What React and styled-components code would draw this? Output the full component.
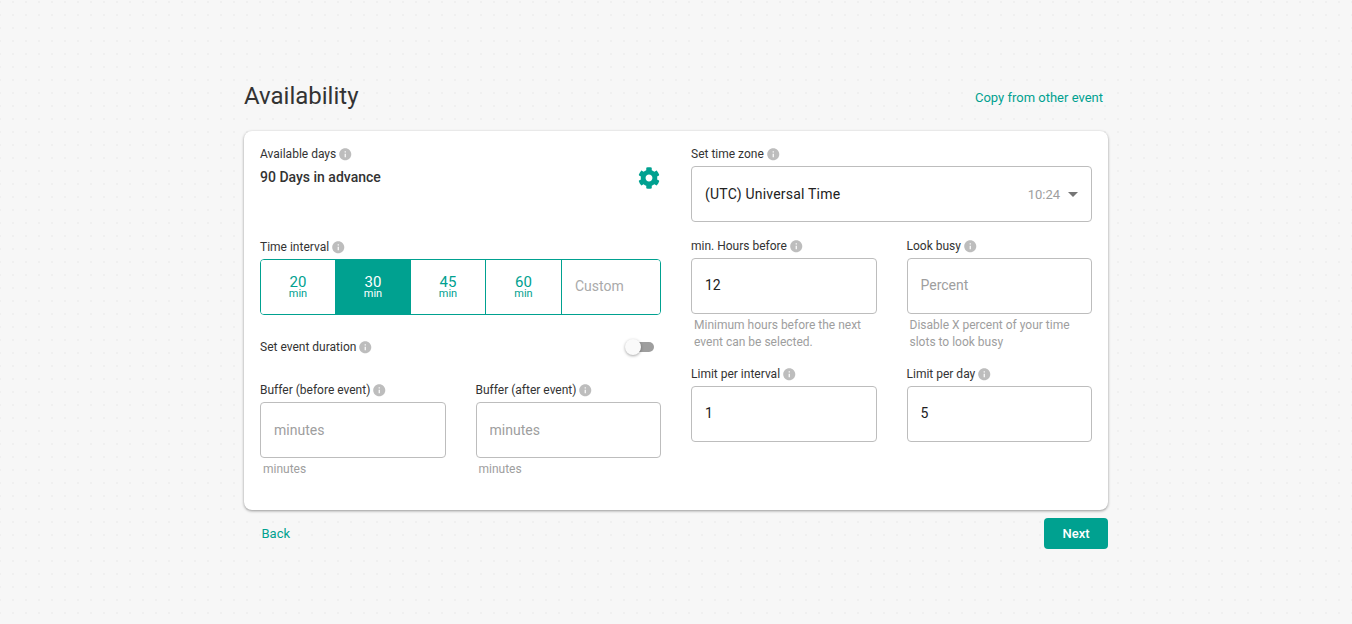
import React from "react";
import styled, { createGlobalStyle } from "styled-components";
import { MdInfo, MdArrowDropDown } from "react-icons/md";
import { FaCog } from "react-icons/fa";

const teal = "#00a190";

const GlobalStyle = createGlobalStyle`
  html, body { margin: 0; padding: 0; }
  body {
    font-family: Roboto, "Noto Sans", sans-serif;
    color: #333;
    background-color: #f7f7f7;
    background-image: radial-gradient(circle at 1px 1px, #f0f0f0 1px, transparent 1.5px);
    background-size: 13px 13px;
    background-position: -1px 1px;
    min-height: 624px;
  }
`;

const Page = styled.div`
  width: 864px;
  margin: 0 auto;
  padding-top: 78px;
`;

const Header = styled.div`
  display: flex;
  align-items: center;
  justify-content: space-between;
  height: 35px;
  margin-bottom: 18px;
`;

const Title = styled.h1`
  margin: 0;
  font-size: 24px;
  font-weight: 400;
  color: #333;
`;

const TextLink = styled.a`
  font-size: 13px;
  color: ${teal};
  padding-right: ${({ $pad }) => $pad || 0}px;
  padding-left: ${({ $left }) => $left || 0}px;
  padding-top: ${({ $top }) => $top || 0}px;
  cursor: pointer;
`;

const Card = styled.div`
  display: grid;
  grid-template-columns: 401px 401px;
  column-gap: 30px;
  box-sizing: border-box;
  height: 379px;
  padding: 16px;
  background: #fff;
  border-radius: 8px;
  box-shadow: 0 1px 3px rgba(0, 0, 0, 0.4);
`;

const Column = styled.div`
  display: flex;
  flex-direction: column;
`;

const Label = styled.div`
  display: flex;
  align-items: center;
  gap: 2px;
  height: 14px;
  font-size: 12px;
  line-height: 14px;
  color: #333;
  white-space: nowrap;
  svg { color: #bdbdbd; flex: none; }
`;

const DaysRow = styled.div`
  display: flex;
  justify-content: space-between;
  height: 79px;
  padding-right: 1px;
`;

const DaysValue = styled.div`
  margin-top: 8px;
  font-size: 14px;
  line-height: 16px;
  font-weight: 500;
  color: #333;
`;

const GearButton = styled.span`
  display: flex;
  margin-top: 6px;
  color: ${teal};
`;

const IntervalGroup = styled.div`
  display: flex;
  height: 56px;
  margin-top: 5px;
  box-sizing: border-box;
  border: 1px solid ${teal};
  border-radius: 4px;
  overflow: hidden;
`;

const IntervalOption = styled.div`
  width: 75px;
  flex: none;
  box-sizing: border-box;
  display: flex;
  flex-direction: column;
  align-items: center;
  justify-content: center;
  border-right: 1px solid ${teal};
  background: ${({ $active }) => ($active ? teal : "#fff")};
  color: ${({ $active }) => ($active ? "#fff" : teal)};
  font-size: 15px;
  line-height: 13px;
  small { font-size: 11px; line-height: 10px; }
  &:nth-child(4) { width: 76px; }
`;

const CustomInput = styled.input`
  flex: 1;
  min-width: 0;
  border: 0;
  outline: 0;
  padding: 0 13px 2px;
  font: 14px Roboto, sans-serif;
  color: #333;
  &::placeholder { color: #aaa; opacity: 1; }
`;

const ToggleRow = styled.div`
  display: flex;
  align-items: center;
  justify-content: space-between;
  height: 16px;
  margin-top: 24px;
  padding-right: 7px;
`;

const Toggle = styled.span`
  position: relative;
  display: block;
  width: 28px;
  height: 10px;
  border-radius: 5px;
  background: #9e9e9e;
  &::after {
    content: "";
    position: absolute;
    left: -1px;
    top: -3px;
    width: 16px;
    height: 16px;
    border-radius: 50%;
    background: #fafafa;
    box-shadow: 0 1px 3px rgba(0, 0, 0, 0.35);
  }
`;

const FieldGrid = styled.div`
  display: grid;
  grid-template-columns: 1fr 1fr;
  column-gap: 30px;
  margin-top: ${({ $top }) => $top || 0}px;
`;

const Field = styled.div`
  display: flex;
  flex-direction: column;
  gap: 5px;
  min-width: 0;
`;

const TextBox = styled.input`
  width: 100%;
  height: 56px;
  box-sizing: border-box;
  padding: 0 13px ${({ $lift }) => ($lift ? 2 : 0)}px;
  border: 1px solid #bdbdbd;
  border-radius: 4px;
  outline: 0;
  background: #fff;
  font: 14px Roboto, sans-serif;
  color: #222;
  &::placeholder { color: #9e9e9e; opacity: 1; }
`;

const Help = styled.div`
  margin-top: -2px;
  padding-left: 3px;
  font-size: 12px;
  line-height: 17px;
  color: #9e9e9e;
`;

const SelectBox = styled.div`
  display: flex;
  align-items: center;
  height: 56px;
  margin-top: 5px;
  box-sizing: border-box;
  padding: 0 6px 0 13px;
  border: 1px solid #bdbdbd;
  border-radius: 4px;
  font-size: 14px;
  color: #222;
  letter-spacing: 0.2px;
`;

const SelectTime = styled.span`
  margin-left: auto;
  font-size: 13px;
  color: #9e9e9e;
  letter-spacing: 0;
`;

const SelectArrow = styled.span`
  display: flex;
  margin-left: 1px;
  color: #757575;
`;

const Footer = styled.div`
  display: flex;
  align-items: center;
  justify-content: space-between;
  margin-top: 8px;
`;

const NextButton = styled.button`
  width: 64px;
  height: 31px;
  border: 0;
  border-radius: 4px;
  background: ${teal};
  color: #fff;
  font: 500 13px Roboto, sans-serif;
  cursor: pointer;
`;

const FieldLabel = ({ children }) => (
  <Label>
    {children}
    <MdInfo size={14.5} />
  </Label>
);

const intervals = [20, 30, 45, 60];

const App = () => {
  return (
    <>
      <GlobalStyle />
      <Page>
        <Header>
          <Title>Availability</Title>
          <TextLink $pad={5} $top={4}>Copy from other event</TextLink>
        </Header>
        <Card>
          <Column>
            <FieldLabel>Available days</FieldLabel>
            <DaysRow>
              <DaysValue>90 Days in advance</DaysValue>
              <GearButton>
                <FaCog size={22} />
              </GearButton>
            </DaysRow>
            <FieldLabel>Time interval</FieldLabel>
            <IntervalGroup>
              {intervals.map((value) => (
                <IntervalOption key={value} $active={value === 30}>
                  {value}
                  <small>min</small>
                </IntervalOption>
              ))}
              <CustomInput placeholder="Custom" />
            </IntervalGroup>
            <ToggleRow>
              <FieldLabel>Set event duration</FieldLabel>
              <Toggle />
            </ToggleRow>
            <FieldGrid $top={28}>
              <Field>
                <FieldLabel>Buffer (before event)</FieldLabel>
                <TextBox placeholder="minutes" />
                <Help>minutes</Help>
              </Field>
              <Field>
                <FieldLabel>Buffer (after event)</FieldLabel>
                <TextBox placeholder="minutes" />
                <Help>minutes</Help>
              </Field>
            </FieldGrid>
          </Column>
          <Column>
            <FieldLabel>Set time zone</FieldLabel>
            <SelectBox>
              (UTC) Universal Time
              <SelectTime>10:24</SelectTime>
              <SelectArrow>
                <MdArrowDropDown size={24} />
              </SelectArrow>
            </SelectBox>
            <FieldGrid $top={17}>
              <Field>
                <FieldLabel>min. Hours before</FieldLabel>
                <TextBox $lift defaultValue="12" />
                <Help>Minimum hours before the next event can be selected.</Help>
              </Field>
              <Field>
                <FieldLabel>Look busy</FieldLabel>
                <TextBox $lift placeholder="Percent" />
                <Help>Disable X percent of your time slots to look busy</Help>
              </Field>
            </FieldGrid>
            <FieldGrid $top={16}>
              <Field>
                <FieldLabel>Limit per interval</FieldLabel>
                <TextBox $lift defaultValue="1" />
              </Field>
              <Field>
                <FieldLabel>Limit per day</FieldLabel>
                <TextBox $lift defaultValue="5" />
              </Field>
            </FieldGrid>
          </Column>
        </Card>
        <Footer>
          <TextLink $left={17.5}>Back</TextLink>
          <NextButton>Next</NextButton>
        </Footer>
      </Page>
    </>
  );
};

export default App;
